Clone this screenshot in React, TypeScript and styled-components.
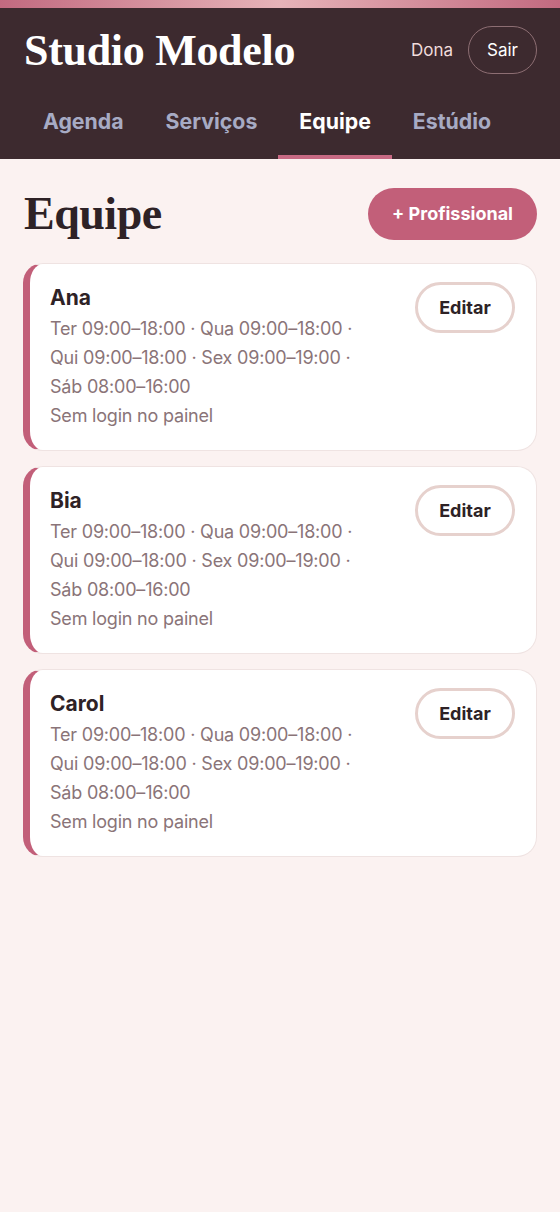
import styled, { createGlobalStyle } from "styled-components";

const sans = `"Inter", "Noto Sans", sans-serif`;
const serif = `"Liberation Serif", "DejaVu Serif", serif`;

const GlobalStyle = createGlobalStyle`
    html, body {
        margin: 0;
        padding: 0;
        background: #fbf2f1;
    }
    body {
        font-family: ${sans};
        color: #2e2226;
    }
`;

type Member = { name: string };

const members: Member[] = [{ name: "Ana" }, { name: "Bia" }, { name: "Carol" }];

const schedule = [
    "Ter 09:00–18:00",
    "Qua 09:00–18:00",
    "Qui 09:00–18:00",
    "Sex 09:00–19:00",
    "Sáb 08:00–16:00",
];

const tabs = ["Agenda", "Serviços", "Equipe", "Estúdio"];

export default function App() {
    return (
        <Page>
            <GlobalStyle />
            <TopStripe />
            <Header>
                <HeaderTop>
                    <Brand>Studio Modelo</Brand>
                    <UserBox>
                        <UserName>Dona</UserName>
                        <GhostButton>Sair</GhostButton>
                    </UserBox>
                </HeaderTop>
                <Tabs>
                    {tabs.map((t) => (
                        <Tab key={t} $active={t === "Equipe"}>
                            {t}
                        </Tab>
                    ))}
                </Tabs>
            </Header>
            <Main>
                <TitleRow>
                    <PageTitle>Equipe</PageTitle>
                    <PrimaryButton>+ Profissional</PrimaryButton>
                </TitleRow>
                <List>
                    {members.map((m) => (
                        <Card key={m.name}>
                            <CardInfo>
                                <Name>{m.name}</Name>
                                <Hours>
                                    {schedule.map((s, i) => (
                                        <span key={s}>
                                            <Slot>
                                                {s}
                                                {i < schedule.length - 1 ? " ·" : ""}
                                            </Slot>{" "}
                                        </span>
                                    ))}
                                </Hours>
                                <Meta>Sem login no painel</Meta>
                            </CardInfo>
                            <EditButton>Editar</EditButton>
                        </Card>
                    ))}
                </List>
            </Main>
        </Page>
    );
}

const Page = styled.div`
    min-height: 1212px;
    background: #fbf2f1;
`;

const TopStripe = styled.div`
    height: 8px;
    background: linear-gradient(90deg, #c26a80 0%, #e6b3b8 50%, #c26a80 100%);
`;

const Header = styled.header`
    background: #3d2a2f;
    padding: 18px 23px 0 24px;
`;

const HeaderTop = styled.div`
    display: flex;
    align-items: center;
    justify-content: space-between;
    height: 48px;
`;

const Brand = styled.div`
    font-family: ${serif};
    font-weight: 700;
    font-size: 44px;
    color: #ffffff;
    letter-spacing: -0.3px;
`;

const UserBox = styled.div`
    display: flex;
    align-items: center;
    gap: 15px;
`;

const UserName = styled.span`
    font-size: 17px;
    color: #f1dcdc;
`;

const GhostButton = styled.button`
    height: 48px;
    padding: 0 18px;
    border-radius: 24px;
    border: 1px solid #8d6e73;
    background: transparent;
    color: #ffffff;
    font-family: ${sans};
    font-size: 17px;
`;

const Tabs = styled.nav`
    display: flex;
    margin-top: 18px;
    margin-left: -2px;
`;

const Tab = styled.div<{ $active?: boolean }>`
    padding: 16px 21px 21px;
    font-size: 21.3px;
    font-weight: 700;
    color: ${(p) => (p.$active ? "#ffffff" : "#a7abc4")};
    border-bottom: 4px solid ${(p) => (p.$active ? "#c86a84" : "transparent")};
`;

const Main = styled.main`
    padding: 28px 23px 40px 23px;
`;

const TitleRow = styled.div`
    display: flex;
    align-items: center;
    justify-content: space-between;
    margin-bottom: 23px;
`;

const PageTitle = styled.h1`
    margin: 0 0 0 1px;
    font-family: ${serif};
    font-weight: 700;
    font-size: 46px;
    letter-spacing: -0.5px;
    color: #2e2226;
`;

const PrimaryButton = styled.button`
    height: 52px;
    padding: 0 24px;
    border: none;
    border-radius: 26px;
    background: #c25f79;
    color: #ffffff;
    font-family: ${sans};
    font-weight: 700;
    font-size: 18px;
`;

const List = styled.div`
    display: flex;
    flex-direction: column;
    gap: 15px;
`;

const Card = styled.div`
    display: flex;
    justify-content: space-between;
    align-items: flex-start;
    gap: 20px;
    background: #ffffff;
    border: 1px solid #efe3e2;
    border-left: 7px solid #c25f79;
    border-radius: 20px;
    padding: 18px 21px 20px 20px;
`;

const CardInfo = styled.div`
    flex: 1;
    min-width: 0;
    padding-top: 1px;
`;

const Name = styled.div`
    font-size: 21px;
    font-weight: 700;
    color: #2e2226;
    line-height: 30px;
    margin-bottom: 1px;
`;

const Hours = styled.div`
    font-size: 18px;
    line-height: 29px;
    letter-spacing: -0.2px;
    color: #8a7478;
`;

const Slot = styled.span`
    white-space: nowrap;
`;

const Meta = styled.div`
    font-size: 18px;
    line-height: 29px;
    letter-spacing: -0.2px;
    color: #8a7478;
`;

const EditButton = styled.button`
    flex-shrink: 0;
    width: 100px;
    height: 51px;
    border-radius: 26px;
    border: 3px solid #e6d1cd;
    background: #ffffff;
    color: #2e2226;
    font-family: ${sans};
    font-weight: 700;
    font-size: 18px;
`;
